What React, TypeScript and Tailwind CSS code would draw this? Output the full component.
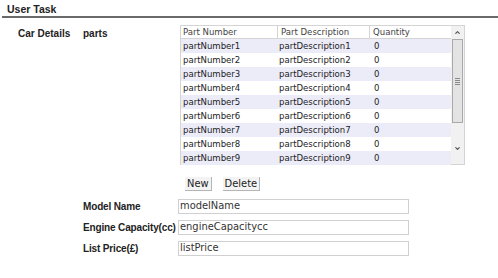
import { ChevronUp, ChevronDown } from "lucide-react";

const rows = Array.from({ length: 9 }, (_, i) => ({
  number: `partNumber${i + 1}`,
  description: `partDescription${i + 1}`,
  quantity: 0,
}));

const font = "font-['Tahoma','DejaVu_Sans_Condensed','DejaVu_Sans',sans-serif]";
const bold = "font-['Liberation_Sans',Arial,sans-serif] font-bold text-[#222]";

function PartsTable() {
  return (
    <div className="flex h-[140px] w-[285px] border border-[#d4d4d4] bg-white">
      <div className="flex-1">
        <div className="flex h-[13px] border-b border-[#d4d4d4] text-[9.5px] leading-[12px] text-[#444]">
          <div className="w-[97px] border-r border-[#d4d4d4] pl-[2px]">Part Number</div>
          <div className="w-[92px] border-r border-[#d4d4d4] pl-[3px]">Part Description</div>
          <div className="flex-1 pl-[3px]">Quantity</div>
        </div>
        {rows.map((r, i) => (
          <div
            key={r.number}
            className={`flex h-[14px] items-center text-[9.5px] text-[#222] ${
              i % 2 === 0 ? "bg-[#ececf9]" : "bg-white"
            }`}
          >
            <div className="w-[97px] pl-[2px]">{r.number}</div>
            <div className="w-[92px] pl-[1px]">{r.description}</div>
            <div className="flex-1 pl-[4px]">{r.quantity}</div>
          </div>
        ))}
      </div>
      <div className="flex w-[13px] flex-col bg-[#f1f1f1]">
        <div className="flex h-[13px] items-center justify-center">
          <ChevronUp size={7} strokeWidth={4} className="text-[#555]" />
        </div>
        <div className="mx-[1px] flex h-[84px] items-center justify-center border border-[#a9a9a9] bg-[#e3e3e3]">
          <div className="flex flex-col gap-[1px]">
            <div className="h-px w-[5px] bg-[#8a8a8a]" />
            <div className="h-px w-[5px] bg-[#8a8a8a]" />
            <div className="h-px w-[5px] bg-[#8a8a8a]" />
            <div className="h-px w-[5px] bg-[#8a8a8a]" />
          </div>
        </div>
        <div className="flex-1" />
        <div className="flex h-[16px] items-center justify-center">
          <ChevronDown size={7} strokeWidth={4} className="text-[#555]" />
        </div>
        <div className="h-[8px]" />
      </div>
    </div>
  );
}

function Field({ label, value }: { label: string; value: string }) {
  return (
    <div className="flex items-center">
      <div className={`w-[95px] whitespace-nowrap text-[10px] tracking-[-0.15px] ${bold}`}>{label}</div>
      <div className="flex h-[15px] w-[231px] items-center border border-[#d0d0d0] bg-white pl-[1px] text-[11px] text-[#333]">
        {value}
      </div>
    </div>
  );
}

export default function App() {
  return (
    <div className={`h-[278px] w-[498px] bg-white ${font}`}>
      <div className={`px-[7px] pt-[3px] text-[10.5px] leading-[13px] ${bold}`}>User Task</div>
      <div className="ml-[2px] h-[2px] bg-[#6a6a6a]" />
      <div className="flex pl-[18px] pt-[7px]">
        <div className={`w-[65px] pt-[1px] text-[10px] ${bold}`}>Car Details</div>
        <div className="flex flex-col">
          <div className="flex">
            <div className={`w-[97px] pt-[1px] text-[10px] ${bold}`}>parts</div>
            <div className="flex flex-col">
              <PartsTable />
              <div className="mt-[12px] flex gap-[11px] pl-[5px]">
                <button className="h-[14px] border-b border-r border-[#b5b5b5] bg-[#f3f3f3] px-[2px] text-[11px] leading-[13px] text-[#222]">
                  New
                </button>
                <button className="h-[14px] border-b border-r border-[#b5b5b5] bg-[#f3f3f3] px-[2px] text-[11px] leading-[13px] text-[#222]">
                  Delete
                </button>
              </div>
            </div>
          </div>
          <div className="mt-[8px] flex flex-col gap-[6px]">
            <Field label="Model Name" value="modelName" />
            <Field label="Engine Capacity(cc)" value="engineCapacitycc" />
            <Field label="List Price(£)" value="listPrice" />
          </div>
        </div>
      </div>
    </div>
  );
}
